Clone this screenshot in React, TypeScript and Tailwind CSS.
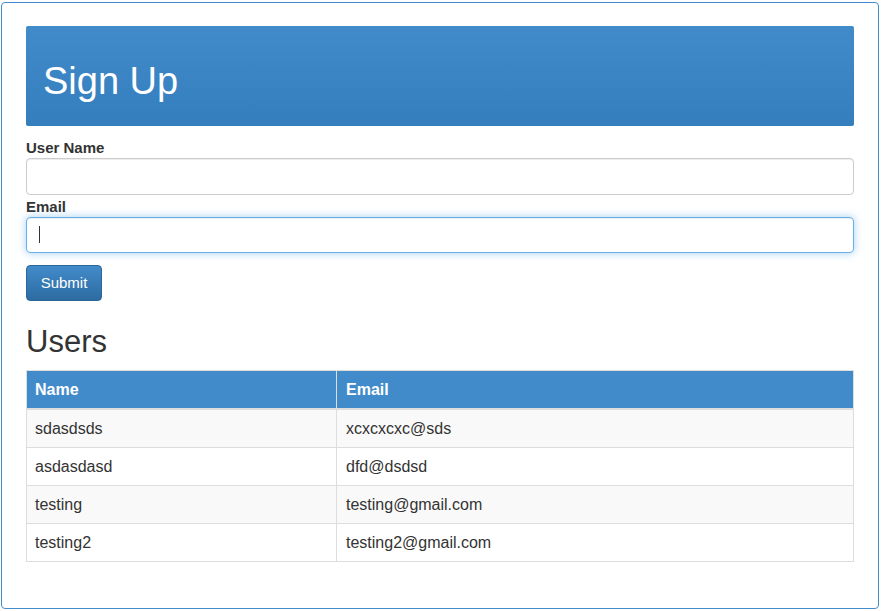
const users = [
  { name: 'sdasdsds', email: 'xcxcxcxc@sds' },
  { name: 'asdasdasd', email: 'dfd@dsdsd' },
  { name: 'testing', email: 'testing@gmail.com' },
  { name: 'testing2', email: 'testing2@gmail.com' },
];

const font = { fontFamily: '"Liberation Sans", Arial, sans-serif' };

export default function App() {
  return (
    <div className="pt-[2px] pl-[1px] bg-white text-[#333]" style={font}>
      <div className="w-[878px] h-[607px] border border-[#428bca] rounded-[4px] px-[24px] pt-[23px]">
        {/* header */}
        <div className="h-[100px] rounded-[2px] bg-gradient-to-b from-[#428bca] to-[#357ebd] flex items-center pl-[17px] pt-[9px]">
          <h1 className="text-[38px] text-white leading-none">Sign Up</h1>
        </div>

        <form className="mt-[12px]" onSubmit={(e) => e.preventDefault()}>
          <label className="block text-[15px] font-bold leading-[20px]">User Name</label>
          <input
            type="text"
            className="block w-full h-[37px] border border-[#ccc] rounded-[4px] shadow-[inset_0_1px_1px_rgba(0,0,0,0.075)] outline-none px-3"
          />
          <label className="block text-[15px] font-bold leading-[20px] mt-[2px]">Email</label>
          <div className="relative">
            <input
              type="text"
              className="block w-full h-[36px] border border-[#66afe9] rounded-[4px] shadow-[inset_0_1px_1px_rgba(0,0,0,0.075),0_0_8px_rgba(102,175,233,0.6)] outline-none px-3"
            />
            <span className="absolute left-[13px] top-[9px] w-px h-[17px] bg-[#333]" />
          </div>
          <button
            type="submit"
            className="mt-[12px] w-[76px] h-[36px] rounded-[4px] border border-[#2b669a] bg-gradient-to-b from-[#428bca] to-[#2d6ca2] text-white text-[15px]"
          >
            Submit
          </button>
        </form>

        <h2 className="text-[31px] leading-[36px] mt-[23px]">Users</h2>

        <table className="w-full mt-[10px] border-collapse border border-[#ddd] text-[16px]">
          <thead>
            <tr className="bg-[#428bca] text-white">
              <th className="w-[310px] text-left font-bold border border-[#ddd] border-b-2 px-[8px] py-[8px] leading-[21px]">Name</th>
              <th className="text-left font-bold border border-[#ddd] border-b-2 px-[9px] py-[8px] leading-[21px]">Email</th>
            </tr>
          </thead>
          <tbody>
            {users.map((u, i) => (
              <tr key={u.email} className={i % 2 === 0 ? 'bg-[#f9f9f9]' : 'bg-white'}>
                <td className="border border-[#ddd] px-[8px] py-[8px] leading-[21px]">{u.name}</td>
                <td className="border border-[#ddd] px-[9px] py-[8px] leading-[21px]">{u.email}</td>
              </tr>
            ))}
          </tbody>
        </table>
      </div>
    </div>
  );
}
